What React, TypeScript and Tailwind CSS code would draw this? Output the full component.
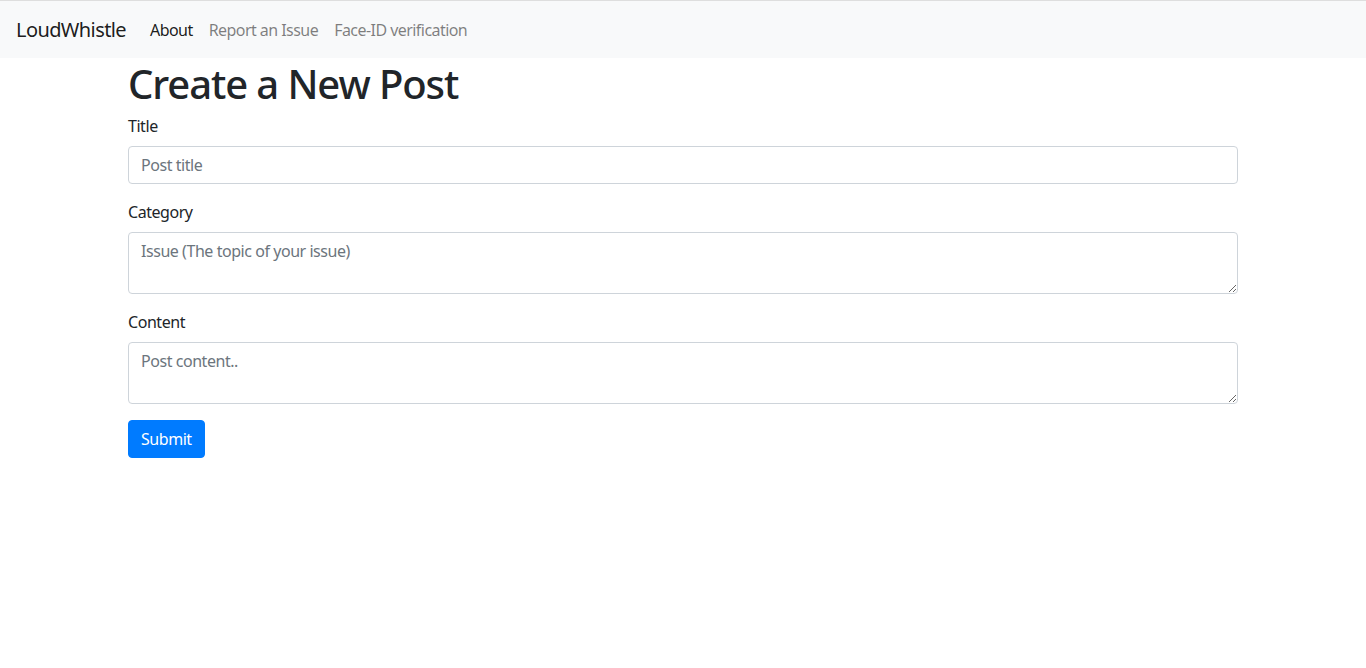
import React from 'react';

const App: React.FC = () => {
  return (
    <div className="min-h-[668px] bg-white text-[#212529] font-['Noto_Sans',sans-serif] text-base leading-6">
      {/* Navbar */}
      <nav className="border-t border-[#dedede] bg-[#f8f9fa] px-4 py-2 flex items-center h-[58px]">
        <a className="text-[20px] leading-[30px] py-[5px] mr-4 text-black/90 tracking-[-0.6px]">LoudWhistle</a>
        <ul className="flex items-center">
          <li><a className="block px-2 py-2 text-black/90 tracking-[-0.55px]">About</a></li>
          <li><a className="block px-2 py-2 text-black/50 tracking-[-0.55px]">Report an Issue</a></li>
          <li><a className="block px-2 py-2 text-black/50 tracking-[-0.55px]">Face-ID verification</a></li>
        </ul>
      </nav>

      {/* Form */}
      <div className="max-w-[1140px] mx-auto px-[15px]">
        <h1 className="text-[40px] leading-[48px] font-medium mb-[6px] pt-[2px] tracking-[-1.1px]">Create a New Post</h1>
        <form>
          <div className="mb-4">
            <label className="block mb-2 tracking-[-0.45px]">Title</label>
            <input
              type="text"
              placeholder="Post title"
              className="block w-full h-[38px] px-3 py-1.5 border border-[#ced4da] rounded bg-white placeholder-[#6c757d] tracking-[-0.45px] outline-none"
            />
          </div>
          <div className="mb-4">
            <label className="block mb-2 tracking-[-0.45px]">Category</label>
            <textarea
              rows={2}
              placeholder="Issue (The topic of your issue)"
              className="block w-full h-[62px] px-3 py-1.5 border border-[#ced4da] rounded bg-white placeholder-[#6c757d] tracking-[-0.45px] outline-none"
            />
          </div>
          <div className="mb-4">
            <label className="block mb-2 tracking-[-0.45px]">Content</label>
            <textarea
              rows={2}
              placeholder="Post content.."
              className="block w-full h-[62px] px-3 py-1.5 border border-[#ced4da] rounded bg-white placeholder-[#6c757d] tracking-[-0.45px] outline-none"
            />
          </div>
          <button
            type="button"
            className="h-[38px] px-3 py-1.5 bg-[#007bff] border border-[#007bff] text-white rounded tracking-[-0.45px]"
          >
            Submit
          </button>
        </form>
      </div>
    </div>
  );
};

export default App;
